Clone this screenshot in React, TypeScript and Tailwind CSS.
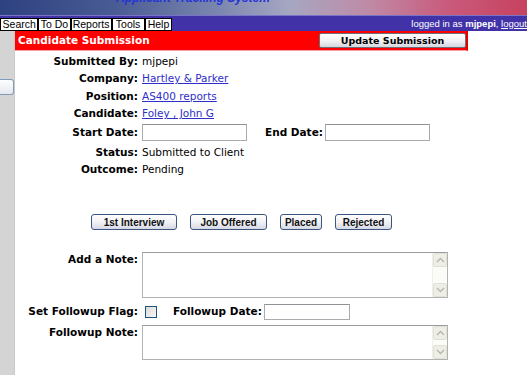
import React from "react";

function Label({ children, className = "" }: { children: React.ReactNode; className?: string }) {
  return <div className={"w-[123px] shrink-0 text-right font-bold " + className}>{children}</div>;
}

function TextBox({ className = "" }: { className?: string }) {
  return <div className={"border border-[#a9abad] border-t-[#8f9296] bg-white " + className} />;
}

function Chevron({ up }: { up?: boolean }) {
  return (
    <svg width="9" height="6" viewBox="0 0 9 6">
      <path d={up ? "M1 5 L4.5 1.5 L8 5" : "M1 1 L4.5 4.5 L8 1"} fill="none" stroke="#b4b8a8" strokeWidth="1.4" />
    </svg>
  );
}

function TextArea({ h }: { h: string }) {
  return (
    <div className={"flex w-[306px] border border-[#b0b2b4] border-t-[#9a9ca0] bg-white " + h}>
      <div className="flex-1" />
      <div className="w-[15px] flex flex-col justify-between bg-[#fbfbf8] border-l border-[#f0f0ea]">
        <div className="h-[14px] flex items-center justify-center bg-[#efeee6] border border-[#e2e1d6] rounded-[2px]">
          <Chevron up />
        </div>
        <div className="h-[14px] flex items-center justify-center bg-[#efeee6] border border-[#e2e1d6] rounded-[2px]">
          <Chevron />
        </div>
      </div>
    </div>
  );
}

function Btn({ children, w }: { children: React.ReactNode; w: string }) {
  return (
    <div
      className={
        "h-[16px] flex items-center justify-center rounded-[3px] border border-[#3a5680] bg-[linear-gradient(#ffffff,#f2f2f6_50%,#d6d8e4)] text-[10px] font-bold font-['Liberation_Sans',sans-serif] text-[#111] " +
        w
      }
    >
      {children}
    </div>
  );
}

export default function App() {
  const tabs: [string, string][] = [
    ["Search", "w-[43px]"],
    ["To Do", "w-[36px]"],
    ["Reports", "w-[46px]"],
    ["Tools", "w-[37px]"],
    ["Help", "w-[31px]"],
  ];
  return (
    <div className="w-[527px] h-[375px] overflow-hidden bg-white font-['DejaVu_Sans',sans-serif] text-[10.5px] leading-[13px] text-black">
      {/* banner */}
      <div className="h-[15px] overflow-hidden bg-[linear-gradient(90deg,#2e4180_0%,#4a5c94_22%,#7d88b0_42%,#a6a7c2_55%,#bf8aa6_70%,#c95a7c_85%,#c7425f_100%)]">
        <div className="pl-[116px] -mt-[9px] whitespace-nowrap font-['Liberation_Sans',sans-serif] text-[12px] leading-[14px] font-bold italic text-[#2434d6]">
          Applicant Tracking System
        </div>
      </div>
      <div className="h-px bg-[#7a74c8]" />
      {/* nav */}
      <div className="h-[15px] bg-[#4232a8] flex items-end overflow-hidden">
        {tabs.map(([t, w]) => (
          <div
            key={t}
            className={
              "h-[13px] bg-white border border-black flex items-center justify-center font-['Liberation_Sans',sans-serif] text-[10.5px] leading-[11px] " +
              w
            }
          >
            {t}
          </div>
        ))}
        <div className="self-center pl-[239px] whitespace-nowrap font-['Liberation_Sans',sans-serif] text-[9.5px] leading-[10px] text-white">
          logged in as <span className="font-bold">mjpepi</span>, <span className="underline">logout</span>
        </div>
      </div>
      {/* body */}
      <div className="flex">
        <div className="w-[15px] h-[344px] shrink-0 bg-[#d4d4d4] border-r border-[#cacaca] pt-[48px]">
          <div className="h-[16px] w-[14px] border border-l-0 border-[#7f9db9] rounded-r-[3px] bg-[linear-gradient(#ffffff,#e4e7ee)]" />
        </div>
        <div className="w-[453px] shrink-0">
          {/* header */}
          <div className="h-[20px] bg-[#ff0000] border-b border-[#f4a4a4] border-r-2 border-r-[#e80000] flex items-center justify-between pl-[3px]">
            <div className="font-bold text-white text-[10.5px]">Candidate Submission</div>
            <div className="h-[15px] w-[147px] rounded-[2px] border border-[#6e6e78] bg-[linear-gradient(#ffffff,#f0f0f4_55%,#d4d6e0)] flex items-center justify-center font-bold text-[9.5px] text-black">
              Update Submission
            </div>
          </div>
          {/* form */}
          <div className="pt-[1px]">
            <div className="flex items-center gap-[4px] h-[18px]">
              <Label>Submitted By:</Label>
              <div>mjpepi</div>
            </div>
            <div className="flex items-center gap-[4px] h-[17px]">
              <Label>Company:</Label>
              <div className="underline text-[#2e2ec8]">Hartley &amp; Parker</div>
            </div>
            <div className="flex items-center gap-[4px] h-[18px]">
              <Label>Position:</Label>
              <div className="underline text-[#2e2ec8]">AS400 reports</div>
            </div>
            <div className="flex items-center gap-[4px] h-[17px]">
              <Label>Candidate:</Label>
              <div className="underline text-[#2e2ec8]">Foley , John G</div>
            </div>
            <div className="flex items-center gap-[4px] h-[21px]">
              <Label>Start Date:</Label>
              <TextBox className="w-[105px] h-[17px]" />
              <div className="ml-[14px] font-bold">End Date:</div>
              <TextBox className="ml-[-2px] w-[105px] h-[17px]" />
            </div>
            <div className="flex items-center gap-[4px] h-[18px]">
              <Label>Status:</Label>
              <div>Submitted to Client</div>
            </div>
            <div className="flex items-center gap-[4px] h-[17px]">
              <Label>Outcome:</Label>
              <div>Pending</div>
            </div>
            {/* buttons */}
            <div className="mt-[36px] flex justify-center gap-[13px]">
              <Btn w="w-[86px]">1st Interview</Btn>
              <Btn w="w-[77px]">Job Offered</Btn>
              <Btn w="w-[42px]">Placed</Btn>
              <Btn w="w-[57px]">Rejected</Btn>
            </div>
            {/* note */}
            <div className="mt-[22px] flex gap-[4px]">
              <Label className="pt-[1px]">Add a Note:</Label>
              <TextArea h="h-[46px]" />
            </div>
            <div className="mt-[5px] flex items-center gap-[4px] h-[17px]">
              <Label>Set Followup Flag:</Label>
              <div className="ml-[3px] w-[12px] h-[12px] border border-[#1c5180] bg-[linear-gradient(135deg,#dcdcd6,#f6f6f4)]" />
              <div className="ml-[12px] font-bold">Followup Date:</div>
              <TextBox className="ml-[-2px] w-[86px] h-[16px]" />
            </div>
            <div className="mt-[5px] flex gap-[4px]">
              <Label className="pt-[1px]">Followup Note:</Label>
              <TextArea h="h-[35px]" />
            </div>
          </div>
        </div>
      </div>
    </div>
  );
}
